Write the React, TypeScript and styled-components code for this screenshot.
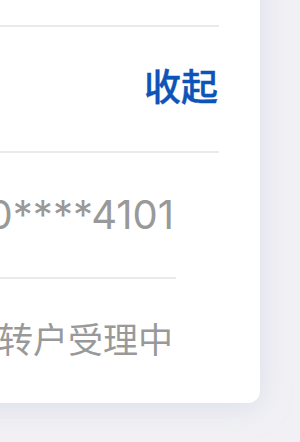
import React from "react";
import styled, { createGlobalStyle } from "styled-components";

const Global = createGlobalStyle`
  html, body {
    margin: 0;
    padding: 0;
    background: #f1f1f5;
    overflow: hidden;
  }
  * { box-sizing: border-box; }
`;

const Page = styled.div`
  width: 300px;
  height: 442px;
  overflow: hidden;
  display: flex;
  align-items: flex-start;
  background: #f1f1f5;
  font-family: "Noto Sans", "Noto Sans CJK SC", sans-serif;
`;

const Card = styled.div`
  flex: none;
  width: 460px;
  margin-left: -200px;
  margin-top: -99px;
  background: #ffffff;
  border-radius: 0 0 12px 12px;
  box-shadow: 0 4px 28px rgba(200, 205, 225, 0.55);
  display: flex;
  flex-direction: column;
`;

const Row = styled.div<{ $inset: number; $last?: boolean }>`
  height: ${(p) => (p.$last ? 124 : 126)}px;
  margin-right: ${(p) => p.$inset}px;
  border-bottom: ${(p) => (p.$last ? "none" : "2px solid #e9e9ee")};
  display: flex;
  align-items: center;
  justify-content: flex-end;
`;

const Toggle = styled.span`
  font-family: "Noto Sans CJK SC", sans-serif;
  font-size: 37px;
  font-weight: 500;
  color: #0d53b8;
  -webkit-text-stroke: 0.4px #0d53b8;
  padding-right: 1px;
  padding-bottom: 8px;
`;

const Value = styled.span<{ $cjk?: boolean; $shift?: number }>`
  font-family: ${(p) =>
    p.$cjk ? `"Noto Sans CJK SC", sans-serif` : `Inter, "Noto Sans", sans-serif`};
  font-size: ${(p) => (p.$cjk ? 35 : 40)}px;
  font-variant-numeric: proportional-nums;
  color: #999999;
  white-space: nowrap;
  padding-right: ${(p) => p.$shift ?? 0}px;
  padding-bottom: ${(p) => (p.$cjk ? 8 : 2)}px;
`;

export default function App() {
  return (
    <>
      <Global />
      <Page>
        <Card>
          <Row $inset={41} />
          <Row $inset={41}>
            <Toggle>收起</Toggle>
          </Row>
          <Row $inset={84}>
            <Value $shift={2}>6260****4101</Value>
          </Row>
          <Row $inset={84} $last>
            <Value $cjk $shift={3}>转户受理中</Value>
          </Row>
        </Card>
      </Page>
    </>
  );
}
